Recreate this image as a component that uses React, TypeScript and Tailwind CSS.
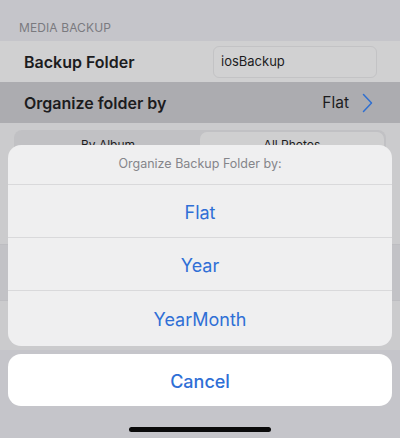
import React from "react";

export default function App() {
  const font = { fontFamily: "Inter, 'Noto Sans', sans-serif" };
  return (
    <div
      className="relative w-[400px] h-[438px] overflow-hidden bg-[#c5c5ca] antialiased"
      style={font}
    >
      {/* background (dimmed) settings page */}
      <div className="flex flex-col">
        <div className="h-[41px] flex items-end pl-[19px] pb-[7px]">
          <span className="text-[12px] leading-none text-[#7a7a7f] tracking-[0.1px]">
            MEDIA BACKUP
          </span>
        </div>
        <div className="h-[41px] flex items-center bg-[#d0d0d1] pl-[24px] pr-[23px]">
          <span className="text-[16px] font-semibold text-[#1c1c1e]">Backup Folder</span>
          <div className="ml-auto w-[164px] h-[32px] rounded-[6px] border border-[#c3c3c5] bg-[#d1d1d2] flex items-center pl-[7px]">
            <span className="text-[13px] text-[#1c1c1e]">iosBackup</span>
          </div>
        </div>
        <div className="h-[41px] flex items-center bg-[#acacb0] pl-[24px] pr-[27px]">
          <span className="text-[16px] font-semibold text-[#1c1c1e]">Organize folder by</span>
          <span className="ml-auto text-[15.5px] text-[#1c1c1e]">Flat</span>
          <svg width="11" height="20" viewBox="0 0 11 20" className="ml-[13px]">
            <path d="M1.5 1.5 L9.5 10 L1.5 18.5" fill="none" stroke="#2f6fd0" strokeWidth="1.5" strokeLinecap="round" strokeLinejoin="round" />
          </svg>
        </div>
        <div className="h-[122px] bg-[#cbcbcd] pt-[7px] px-[14px] border-b border-[#bdbdc1]">
          <div className="h-[30px] rounded-[8px] bg-[#c1c1c4] flex p-[2px]">
            <div className="flex-1 flex items-center justify-center text-[12px] text-[#1c1c1e]">By Album</div>
            <div className="flex-1 rounded-[7px] bg-[#cfcfd0] flex items-center justify-center text-[12px] text-[#1c1c1e]">All Photos</div>
          </div>
        </div>
        <div className="h-[55px] bg-[#c2c2c6]" />
        <div className="h-[50px] bg-[#cbcbcd] border-t border-[#bdbdc1]" />
      </div>

      {/* action sheet overlay */}
      <div className="absolute left-[8px] right-[8px] top-[145px] flex flex-col gap-[8px]">
        <div className="rounded-[13px] bg-[#efeff0] overflow-hidden flex flex-col">
          <div className="h-[40px] flex items-center justify-center border-b border-[#d9d9db]">
            <span className="text-[12.5px] text-[#85858a]">Organize Backup Folder by:</span>
          </div>
          <div className="h-[53px] flex items-center justify-center border-b border-[#d9d9db] pt-[2px]">
            <span className="text-[18px] text-[#2f6fd6]">Flat</span>
          </div>
          <div className="h-[53px] flex items-center justify-center border-b border-[#d9d9db] pt-[2px]">
            <span className="text-[18px] text-[#2f6fd6]">Year</span>
          </div>
          <div className="h-[55px] flex items-center justify-center pt-[2px]">
            <span className="text-[18px] text-[#2f6fd6]">YearMonth</span>
          </div>
        </div>
        <div className="h-[52px] rounded-[13px] bg-white flex items-center justify-center pt-[2px]">
          <span className="text-[18px] font-medium text-[#2f6fd6]">Cancel</span>
        </div>
      </div>

      {/* home indicator */}
      <div className="absolute left-[129px] top-[427px] w-[142px] h-[5px] rounded-full bg-[#0a0a0a]" />
    </div>
  );
}
